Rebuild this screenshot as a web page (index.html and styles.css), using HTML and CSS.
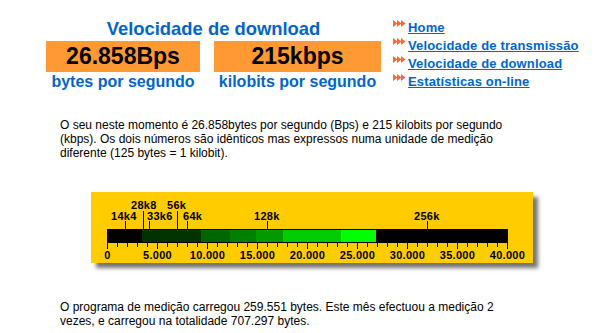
FILE: index.html
```html
<!DOCTYPE html>
<html lang="pt">
<head>
<meta charset="utf-8">
<title>Velocidade de download</title>
<link rel="stylesheet" href="styles.css">
</head>
<body>
<div class="top">
  <div class="speed">
    <h1 class="title">Velocidade de download</h1>
    <div class="cells">
      <div class="cell c1">
        <div class="value">26.858Bps</div>
        <div class="unit">bytes por segundo</div>
      </div>
      <div class="cell c2">
        <div class="value">215kbps</div>
        <div class="unit">kilobits por segundo</div>
      </div>
    </div>
  </div>
  <ul class="nav">
    <li><svg class="arrow" viewBox="0 0 13 7"><path d="M0 0L4.5 3.5L0 7Z M4 0L8.5 3.5L4 7Z M8 0L12.5 3.5L8 7Z"/></svg><a href="#">Home</a></li>
    <li><svg class="arrow" viewBox="0 0 13 7"><path d="M0 0L4.5 3.5L0 7Z M4 0L8.5 3.5L4 7Z M8 0L12.5 3.5L8 7Z"/></svg><a href="#">Velocidade de transmissão</a></li>
    <li><svg class="arrow" viewBox="0 0 13 7"><path d="M0 0L4.5 3.5L0 7Z M4 0L8.5 3.5L4 7Z M8 0L12.5 3.5L8 7Z"/></svg><a href="#">Velocidade de download</a></li>
    <li><svg class="arrow" viewBox="0 0 13 7"><path d="M0 0L4.5 3.5L0 7Z M4 0L8.5 3.5L4 7Z M8 0L12.5 3.5L8 7Z"/></svg><a href="#">Estatísticas on-line</a></li>
  </ul>
</div>

<p class="text intro">O seu neste momento é 26.858bytes por segundo (Bps) e 215 kilobits por segundo (kbps). Os dois números são idênticos mas expressos numa unidade de medição diferente (125 bytes = 1 kilobit).</p>

<div class="gauge">
  <svg class="meter" width="442" height="71" viewBox="0 0 442 71">
    <rect x="16" y="37" width="401" height="14" fill="#000"/>
    <rect x="51" y="38" width="59" height="12" fill="#003300"/>
    <rect x="110" y="38" width="29" height="12" fill="#006600"/>
    <rect x="139" y="38" width="26" height="12" fill="#008000"/>
    <rect x="165" y="38" width="27" height="12" fill="#009900"/>
    <rect x="192" y="38" width="58" height="12" fill="#00cc00"/>
    <rect x="250" y="38" width="35" height="12" fill="#00ff00"/>
    <path class="ticks" d="M52.5 19V37 M86.5 19V37 M34.5 29V37 M58.5 29V37 M96.5 29V37 M176.5 29V37 M336.5 29V37
      M16.5 51v6 M66.5 51v6 M116.5 51v6 M166.5 51v6 M216.5 51v6 M266.5 51v6 M316.5 51v6 M366.5 51v6 M416.5 51v6
      M26.5 51v4 M36.5 51v4 M46.5 51v4 M56.5 51v4 M76.5 51v4 M86.5 51v4 M96.5 51v4 M106.5 51v4
      M126.5 51v4 M136.5 51v4 M146.5 51v4 M156.5 51v4 M176.5 51v4 M186.5 51v4 M196.5 51v4 M206.5 51v4
      M226.5 51v4 M236.5 51v4 M246.5 51v4 M256.5 51v4 M276.5 51v4 M286.5 51v4 M296.5 51v4 M306.5 51v4
      M326.5 51v4 M336.5 51v4 M346.5 51v4 M356.5 51v4 M376.5 51v4 M386.5 51v4 M396.5 51v4 M406.5 51v4"/>
    <g class="lbl">
      <text x="40" y="17.3">28k8</text>
      <text x="76" y="17.3">56k</text>
      <text x="20" y="27.5">14k4</text>
      <text x="56" y="27.5">33k6</text>
      <text x="92" y="27.5">64k</text>
      <text x="163" y="27.5">128k</text>
      <text x="323" y="27.5">256k</text>
    </g>
    <g class="lbl mid">
      <text x="16.5" y="66.5">0</text>
      <text x="66.5" y="66.5">5.000</text>
      <text x="116.5" y="66.5">10.000</text>
      <text x="166.5" y="66.5">15.000</text>
      <text x="216.5" y="66.5">20.000</text>
      <text x="266.5" y="66.5">25.000</text>
      <text x="316.5" y="66.5">30.000</text>
      <text x="366.5" y="66.5">35.000</text>
      <text x="416.5" y="66.5">40.000</text>
    </g>
  </svg>
</div>

<p class="text outro">O programa de medição carregou 259.551 bytes. Este mês efectuou a medição 2 vezes, e carregou na totalidade 707.297 bytes.</p>
</body>
</html>
```
FILE: styles.css
```css
body {
  margin: 0;
  background: #fff;
  color: #000;
  font-family: "Liberation Sans", Arial, sans-serif;
  font-size: 12px;
}

.top {
  display: flex;
  align-items: flex-start;
}

.speed {
  padding: 18px 0 0 46px;
  width: 335px;
}

.title {
  margin: 0 0 1px;
  font-size: 18.4px;
  line-height: 22px;
  font-weight: bold;
  color: #0066cc;
  text-align: center;
}

.cells {
  display: flex;
  gap: 14px;
}

.c1 { width: 154px; }
.c2 { width: 167px; }

.value {
  height: 31px;
  line-height: 31px;
  background: #ff9933;
  font-size: 23px;
  font-weight: bold;
  text-align: center;
}

.unit {
  font-size: 16px;
  line-height: 20px;
  font-weight: bold;
  color: #0066cc;
  text-align: center;
  white-space: nowrap;
}

.nav {
  list-style: none;
  margin: 19px 0 0 12px;
  padding: 0;
}

.nav li {
  display: flex;
  align-items: flex-start;
  height: 18px;
  line-height: 18px;
}

.arrow {
  flex: none;
  width: 13px;
  height: 7px;
  margin: 1px 2px 0 0;
  fill: #ff6633;
}

.nav a {
  font-size: 13px;
  font-weight: bold;
  letter-spacing: 0.15px;
  color: #0066cc;
  text-decoration: underline;
  white-space: nowrap;
}

.text {
  margin: 0;
  padding-left: 60px;
  width: 467px;
  line-height: 14px;
}

.intro { margin-top: 26px; }
.outro { margin-top: 37px; }

.gauge {
  margin: 32px 0 0 91px;
  width: 442px;
  height: 71px;
  background: #ffcc00;
  box-shadow: 5px 5px 4px rgba(0, 0, 0, 0.55);
}

.meter { display: block; }

.ticks {
  stroke: #000;
  stroke-width: 1;
  fill: none;
  shape-rendering: crispEdges;
}

.lbl {
  font-family: "Liberation Sans", Arial, sans-serif;
  font-size: 11px;
  font-weight: bold;
  letter-spacing: 0.3px;
  fill: #000;
}

.mid { text-anchor: middle; }
```
